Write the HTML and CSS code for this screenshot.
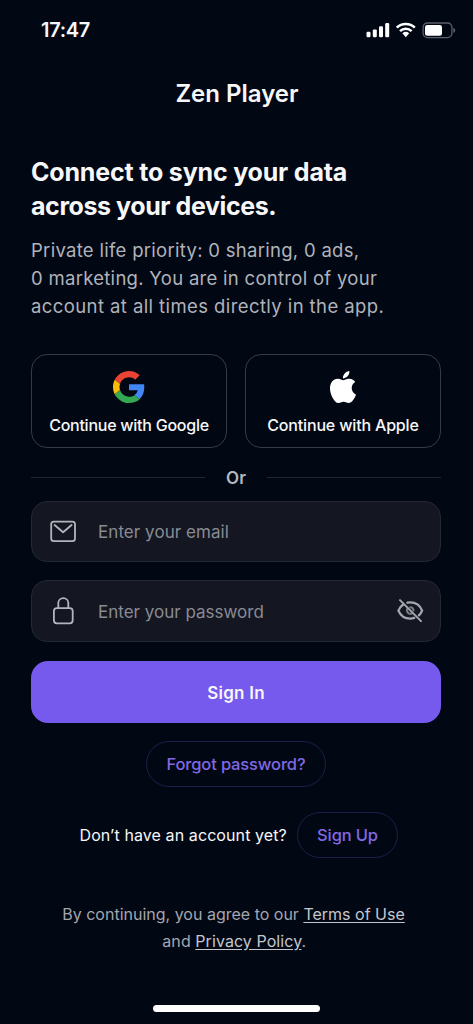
FILE: index.html
```html
<!DOCTYPE html>
<html lang="en">
<head>
<meta charset="utf-8">
<title>Zen Player</title>
<link rel="stylesheet" href="styles.css">
</head>
<body>
<main class="screen">
  <div class="status">
    <span class="clock">17:47</span>
    <svg class="status-icons" width="90" height="18" viewBox="0 0 90 18">
      <g fill="#fff">
        <rect x="0.5" y="10.7" width="4" height="5.6" rx="1.2"/>
        <rect x="6.8" y="8.4" width="4" height="7.9" rx="1.2"/>
        <rect x="13" y="5.3" width="4" height="11" rx="1.2"/>
        <rect x="19.2" y="2" width="4" height="14.3" rx="1.2"/>
        <path d="M36.4 12.2 L39.8 16.3 L43.2 12.2 A5.2 5.2 0 0 0 36.4 12.2Z"/>
      </g>
      <g fill="none" stroke="#fff" stroke-width="2.6">
        <path d="M30.8 6.7 A12.8 12.8 0 0 1 48.8 6.7"/>
        <path d="M34 10.1 A8.3 8.3 0 0 1 45.6 10.1"/>
      </g>
      <rect x="57.1" y="2" width="28.8" height="14.6" rx="4.3" fill="none" stroke="#5d6069" stroke-width="1.3"/>
      <rect x="59" y="4" width="17" height="10.8" rx="2.2" fill="#fff"/>
      <path d="M87.3 6.7 Q89.2 7.2 89.2 9.3 T87.3 11.9Z" fill="#5d6069"/>
    </svg>
  </div>
  <h1 class="brand">Zen Player</h1>
  <h2 class="headline"><span>Connect to sync your data</span><br><span class="headline-end">across your devices.</span></h2>
  <p class="intro">Private life priority: 0 sharing, 0 ads,<br>0 marketing. You are in control of your<br><span class="intro-end">account at all times directly in the app.</span></p>
  <div class="providers">
    <button class="provider">
      <svg width="32" height="32" viewBox="0 0 48 48">
        <path fill="#EA4335" d="M24 9.5c3.54 0 6.71 1.22 9.21 3.6l6.85-6.85C35.9 2.38 30.47 0 24 0 14.62 0 6.51 5.38 2.56 13.22l7.98 6.19C12.43 13.72 17.74 9.5 24 9.5z"/>
        <path fill="#4285F4" d="M46.98 24.55c0-1.57-.15-3.09-.38-4.55H24v9.02h12.94c-.58 2.96-2.26 5.48-4.78 7.18l7.73 6c4.51-4.18 7.09-10.36 7.09-17.65z"/>
        <path fill="#FBBC05" d="M10.53 28.59c-.48-1.45-.76-2.99-.76-4.59s.27-3.14.76-4.59l-7.98-6.19C.92 16.46 0 20.12 0 24c0 3.88.92 7.54 2.56 10.78l7.97-6.19z"/>
        <path fill="#34A853" d="M24 48c6.48 0 11.93-2.13 15.89-5.81l-7.73-6c-2.15 1.45-4.92 2.3-8.16 2.3-6.26 0-11.57-4.22-13.47-9.91l-7.98 6.19C6.51 42.62 14.62 48 24 48z"/>
      </svg>
      <span class="google-label">Continue with Google</span>
    </button>
    <button class="provider">
      <svg width="32" height="32" viewBox="0 0 24 24"><path fill="#fff" d="M12.152 6.896c-.948 0-2.415-1.078-3.96-1.04-2.04.027-3.91 1.183-4.961 3.014-2.117 3.675-.546 9.103 1.519 12.09 1.013 1.454 2.208 3.09 3.792 3.039 1.52-.065 2.09-.987 3.935-.987 1.831 0 2.35.987 3.96.948 1.637-.026 2.676-1.48 3.676-2.948 1.156-1.688 1.636-3.325 1.662-3.415-.039-.013-3.182-1.221-3.22-4.857-.026-3.04 2.48-4.494 2.597-4.559-1.429-2.09-3.623-2.324-4.39-2.376-2-.156-3.675 1.09-4.61 1.09zM15.53 3.83c.843-1.012 1.4-2.427 1.245-3.83-1.207.052-2.662.805-3.532 1.818-.78.896-1.454 2.338-1.273 3.714 1.338.104 2.715-.688 3.559-1.701"/></svg>
      <span class="apple-label">Continue with Apple</span>
    </button>
  </div>
  <div class="divider"><span class="or">Or</span></div>
  <div class="field">
    <svg class="lead" width="28" height="28" viewBox="0 0 28 28" fill="none" stroke="#b3b5bd" stroke-width="1.8" stroke-linecap="round" stroke-linejoin="round">
      <rect x="2.2" y="4.6" width="23.8" height="19.5" rx="2.6"/>
      <path d="M5.6 8 L14.1 15.3 L22.6 8"/>
    </svg>
    <span class="hint email-hint">Enter your email</span>
  </div>
  <div class="field password">
    <svg class="lead" width="28" height="28" viewBox="0 0 28 28" fill="none" stroke="#b3b5bd" stroke-width="1.8" stroke-linejoin="round">
      <rect x="4.9" y="11.1" width="18.8" height="15.2" rx="3"/>
      <path d="M9.3 11 V6.1 A5 5 0 0 1 19.3 6.1 V11"/>
    </svg>
    <span class="hint password-hint">Enter your password</span>
    <svg class="reveal" width="28" height="28" viewBox="0 0 28 28" fill="none" stroke="#a5a7af" stroke-width="2.3" stroke-linecap="round">
      <path d="M7.2 7.5 C4.9 9 3.4 11.2 2.4 13.6 C4.6 18.8 9 21.6 14.2 21.6 C15.6 21.6 17 21.4 18.2 20.9"/>
      <path d="M11.4 5.7 C12.3 5.5 13.2 5.4 14.2 5.4 C19.6 5.4 24.1 8.6 26.1 13.6 C25.4 15.4 24.3 17 22.9 18.3"/>
      <path d="M11.4 11.8 A3.4 3.4 0 0 0 15.8 16.5 M14.2 10.3 A3.4 3.4 0 0 1 17.5 13.6" stroke="#777a84" stroke-width="2"/>
      <path d="M4 3.1 L25 24.1" stroke-width="2"/>
    </svg>
  </div>
  <button class="sign-in"><span>Sign In</span></button>
  <button class="pill forgot"><span>Forgot password?</span></button>
  <div class="signup-row">
    <span class="question">Don’t have an account yet?</span>
    <button class="pill signup"><span>Sign Up</span></button>
  </div>
  <p class="legal"><span class="legal-top">By continuing, you agree to our <a>Terms of Use</a></span><br><span class="legal-bottom">and <a>Privacy Policy</a>.</span></p>
  <div class="home-bar"></div>
</main>
</body>
</html>
```
FILE: styles.css
```css
* { box-sizing: border-box; }
body {
  margin: 0;
  background: #010713;
  color: #f7f7f9;
  font-family: Inter, "Liberation Sans", sans-serif;
}
button {
  margin: 0;
  padding: 0;
  background: none;
  color: inherit;
  font: inherit;
}
svg { display: block; flex: none; }
h1, h2, p { margin: 0; }
.screen {
  width: 473px;
  height: 1024px;
  padding: 0 32px 0 31px;
  display: flex;
  flex-direction: column;
  overflow: hidden;
}
.status {
  height: 60px;
  margin-right: -15px;
  padding-left: 10px;
  display: flex;
  justify-content: space-between;
  align-items: center;
}
.clock { font-size: 20px; font-weight: 600; letter-spacing: -0.3px; }
.brand {
  height: 68px;
  padding-left: 2px;
  line-height: 68px;
  text-align: center;
  font-size: 24px;
  font-weight: 600;
}
.headline {
  margin-top: 27px;
  font-size: 25px;
  line-height: 34px;
  font-weight: 650;
  letter-spacing: -0.18px;
  white-space: nowrap;
}
.headline-end { letter-spacing: -0.42px; }
.intro {
  margin-top: 12.5px;
  font-size: 18.5px;
  line-height: 28.3px;
  letter-spacing: 0.29px;
  color: #b1b3bb;
  white-space: nowrap;
}
.intro-end { letter-spacing: 0.41px; }
.providers {
  margin-top: 33.5px;
  display: grid;
  grid-template-columns: 196px 196px;
  justify-content: space-between;
}
.provider {
  height: 94px;
  padding-top: 5px;
  border: 1.5px solid #393b44;
  border-radius: 16px;
  display: flex;
  flex-direction: column;
  align-items: center;
  justify-content: center;
  gap: 11px;
  font-size: 16px;
  line-height: 22px;
  font-weight: 500;
  white-space: nowrap;
}
.google-label { letter-spacing: -0.25px; }
.apple-label { letter-spacing: -0.17px; }
.divider {
  height: 53px;
  padding-top: 6px;
  display: flex;
  align-items: center;
  gap: 21px;
  font-size: 17px;
  font-weight: 600;
  color: #b6b8c0;
}
.or { padding-top: 1px; }
.divider::before, .divider::after {
  content: "";
  flex: 1;
  height: 1px;
  background: #222630;
}
.field {
  height: 61px;
  padding: 0 16px 0 17px;
  border: 1px solid #232832;
  border-radius: 16px;
  background: #141721;
  display: flex;
  align-items: center;
}
.password { margin-top: 18px; height: 62px; }
.hint { margin-left: 21px; padding-top: 2px; font-size: 17px; color: #898b94; white-space: nowrap; }
.email-hint { letter-spacing: 0.06px; }
.reveal { margin-left: auto; }
.sign-in {
  margin-top: 19px;
  padding-top: 2px;
  height: 62px;
  flex: none;
  border: 0;
  border-radius: 17px;
  background: #7659ed;
  font-size: 17px;
  font-weight: 600;
  letter-spacing: 0.25px;
}
.pill {
  height: 46px;
  flex: none;
  border: 1px solid #211d48;
  border-radius: 23px;
  color: #8268e4;
  font-size: 16.5px;
  font-weight: 450;
  letter-spacing: -0.14px;
  white-space: nowrap;
}
.forgot { width: 180px; margin-top: 18px; padding-top: 1px; align-self: center; }
.signup-row {
  margin-top: 25px;
  margin-right: 43px;
  padding-left: 48.5px;
  display: flex;
  justify-content: space-between;
  align-items: center;
}
.question { font-size: 16px; letter-spacing: 0.09px; white-space: nowrap; }
.signup { width: 101px; }
.legal {
  margin-top: 43.5px;
  padding-right: 5px;
  text-align: center;
  font-size: 16px;
  line-height: 26.5px;
  color: #a4a6ae;
  white-space: nowrap;
}
.legal-bottom { padding-left: 1.5px; letter-spacing: 0.07px; }
.legal a { color: #c5c7cf; text-decoration: underline; text-underline-offset: 2px; }
.home-bar {
  width: 167px;
  height: 7px;
  margin: auto auto 12px;
  border-radius: 4px;
  background: #fff;
}
```
